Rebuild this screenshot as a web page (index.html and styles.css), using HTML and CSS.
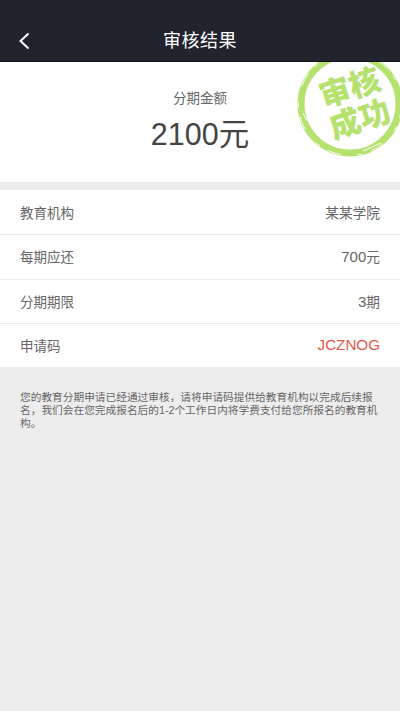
FILE: index.html
```html
<!DOCTYPE html>
<html lang="zh">
<head>
    <meta charset="UTF-8">
    <meta name="viewport" content="width=device-width, initial-scale=1.0">
    <title>审核结果</title>
    <link rel="stylesheet" href="styles.css">
</head>
<body>
    <header class="nav-bar">
        <svg class="back-icon" width="12" height="18" viewBox="0 0 12 18">
            <path d="M10.5 1.5 L2.5 9 L10.5 16.5" fill="none" stroke="#fff" stroke-width="2"/>
        </svg>
        <h1 class="nav-title">审核结果</h1>
    </header>

    <section class="amount-box">
        <div class="amount-label">分期金额</div>
        <div class="amount-value">2100元</div>
        <div class="stamp">
            <svg class="stamp-ring" width="106" height="106" viewBox="0 0 106 106">
                <circle cx="53" cy="53" r="49" fill="none" stroke="#b5e26f" stroke-width="7"/>
                <!-- worn edge of the stamp -->
                <circle cx="53" cy="53" r="51.5" fill="none" stroke="#fff" stroke-width="1" stroke-dasharray="14 9 5 17"/>
                <path d="M6 62 L10 70 M66 100 L84 92" fill="none" stroke="#fff" stroke-width="1"/>
            </svg>
            <div class="stamp-text">
                <span>审核</span>
                <span>成功</span>
            </div>
        </div>
    </section>

    <section class="info-list">
        <div class="info-row">
            <span class="info-name">教育机构</span>
            <span class="info-value">某某学院</span>
        </div>
        <div class="info-row">
            <span class="info-name">每期应还</span>
            <span class="info-value"><span class="digits">700</span>元</span>
        </div>
        <div class="info-row">
            <span class="info-name">分期期限</span>
            <span class="info-value"><span class="digits">3</span>期</span>
        </div>
        <div class="info-row">
            <span class="info-name">申请码</span>
            <span class="info-value code">JCZNOG</span>
        </div>
    </section>

    <p class="note">您的教育分期申请已经通过审核，请将申请码提供给教育机构以完成后续报名，我们会在您完成报名后的1-2个工作日内将学费支付给您所报名的教育机构。</p>
</body>
</html>
```

FILE: styles.css
```css
html,
body {
    margin: 0;
    padding: 0;
}
body {
    width: 400px;
    height: 711px;
    overflow: hidden;
    background-color: #ededed;
    color: #666;
    font-family: "Liberation Sans", "Noto Sans CJK SC", sans-serif;
}
.nav-bar {
    display: flex;
    align-items: center;
    justify-content: center;
    position: relative;
    height: 62px;
    padding-top: 17px;
    box-sizing: border-box;
    background-color: #21232f;
    border-bottom: 1px solid #14151c;
}
.back-icon {
    position: absolute;
    left: 18px;
    top: 32px;
}
.nav-title {
    margin: 0;
    color: #fff;
    font-size: 18px;
    font-weight: 400;
    letter-spacing: 0.5px;
}
.amount-box {
    position: relative;
    height: 120px;
    overflow: hidden;
    background-color: #fff;
    text-align: center;
}
.amount-label {
    padding-top: 29px;
    font-size: 13.5px;
    line-height: 16px;
    color: #666;
}
.amount-value {
    margin-top: 7px;
    font-size: 30.5px;
    line-height: 40px;
    color: #444;
}
.stamp {
    position: absolute;
    left: 297px;
    top: -11px;
    width: 106px;
    height: 106px;
}
.stamp-ring {
    display: block;
}
.stamp-text {
    position: absolute;
    left: 2px;
    top: 20px;
    width: 112px;
    transform: rotate(-18deg);
    color: #b5e26f;
    font-size: 31px;
    font-weight: 900;
    line-height: 33px;
    text-align: center;
}
.stamp-text span {
    display: block;
}
.info-list {
    margin-top: 8px;
    background-color: #fff;
}
.info-row {
    display: flex;
    align-items: center;
    justify-content: space-between;
    height: 44.25px;
    padding: 0 20px 1px;
    box-sizing: border-box;
    border-top: 1px solid #e9e9e9;
    font-size: 13.5px;
}
.info-row:first-child {
    border-top: none;
}
.info-value {
    font-size: 13.7px;
}
.digits {
    font-size: 15px;
}
.code {
    color: #e2574a;
    font-size: 15.2px;
}
.note {
    margin: 0;
    padding: 24px 20px 0;
    font-size: 10.7px;
    line-height: 13px;
    color: #666;
}
```
